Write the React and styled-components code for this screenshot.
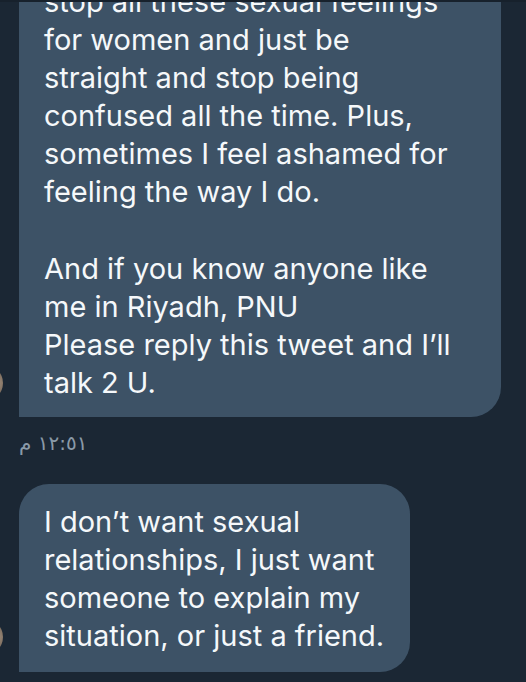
import React from 'react';
import styled, { createGlobalStyle } from 'styled-components';

const GlobalStyle = createGlobalStyle`
  html, body {
    margin: 0;
    padding: 0;
    background: #1b2734;
  }
`;

const Screen = styled.div`
  width: 526px;
  height: 682px;
  overflow: hidden;
  background: #1b2734;
  border-top: 2px solid #17212c;
  box-sizing: border-box;
`;

const Thread = styled.div`
  display: flex;
  flex-direction: column;
  margin-top: -38px;
`;

const MessageRow = styled.div`
  display: flex;
  align-items: flex-end;
  margin-top: ${p => p.$gap || 0}px;
`;

// only a sliver of the sender's avatar shows at the left edge
const Avatar = styled.div`
  flex: none;
  width: 36px;
  height: 36px;
  border-radius: 50%;
  margin-left: -33px;
  margin-right: 16px;
  margin-bottom: ${p => p.$lift}px;
  background: radial-gradient(circle at 80% 50%, #a08e7c 0%, #6e5f52 45%, #3a332e 100%);
`;

const Bubble = styled.div`
  box-sizing: border-box;
  ${p => (p.$wide ? 'width: 482px;' : 'width: fit-content;')}
  padding: 19px 26px ${p => p.$padBottom}px 25px;
  background: #3d5266;
  color: #f5f8fa;
  border-radius: 30px 30px 30px 0;
  font-family: Inter, "Noto Sans", sans-serif;
  font-size: 29px;
  line-height: 38.1px;
  white-space: nowrap;
`;

const Timestamp = styled.div`
  margin: 14px 0 0 19px;
  height: 24px;
  font-family: "DejaVu Sans", "Noto Sans", sans-serif;
  font-size: 20px;
  line-height: 24px;
  color: #8a9aa8;
`;

const lines = text => text.split('\n').map((l, i, all) => (
  <React.Fragment key={i}>
    {l || '\u00a0'}
    {i < all.length - 1 && <br />}
  </React.Fragment>
));

const first = `stop all these sexual feelings
for women and just be
straight and stop being
confused all the time. Plus,
sometimes I feel ashamed for
feeling the way I do.

And if you know anyone like
me in Riyadh, PNU
Please reply this tweet and I’ll
talk 2 U.`;

const second = `I don’t want sexual
relationships, I just want
someone to explain my
situation, or just a friend.`;

export default function App() {
  return (
    <>
      <GlobalStyle />
      <Screen>
        <Thread>
          <MessageRow>
            <Avatar $lift={16} />
            <Bubble $wide $padBottom={15}>{lines(first)}</Bubble>
          </MessageRow>
          <Timestamp><span dir="rtl">١٢:٥١ م</span></Timestamp>
          <MessageRow $gap={29}>
            <Avatar $lift={17} />
            <Bubble $padBottom={17}>{lines(second)}</Bubble>
          </MessageRow>
        </Thread>
      </Screen>
    </>
  );
}
